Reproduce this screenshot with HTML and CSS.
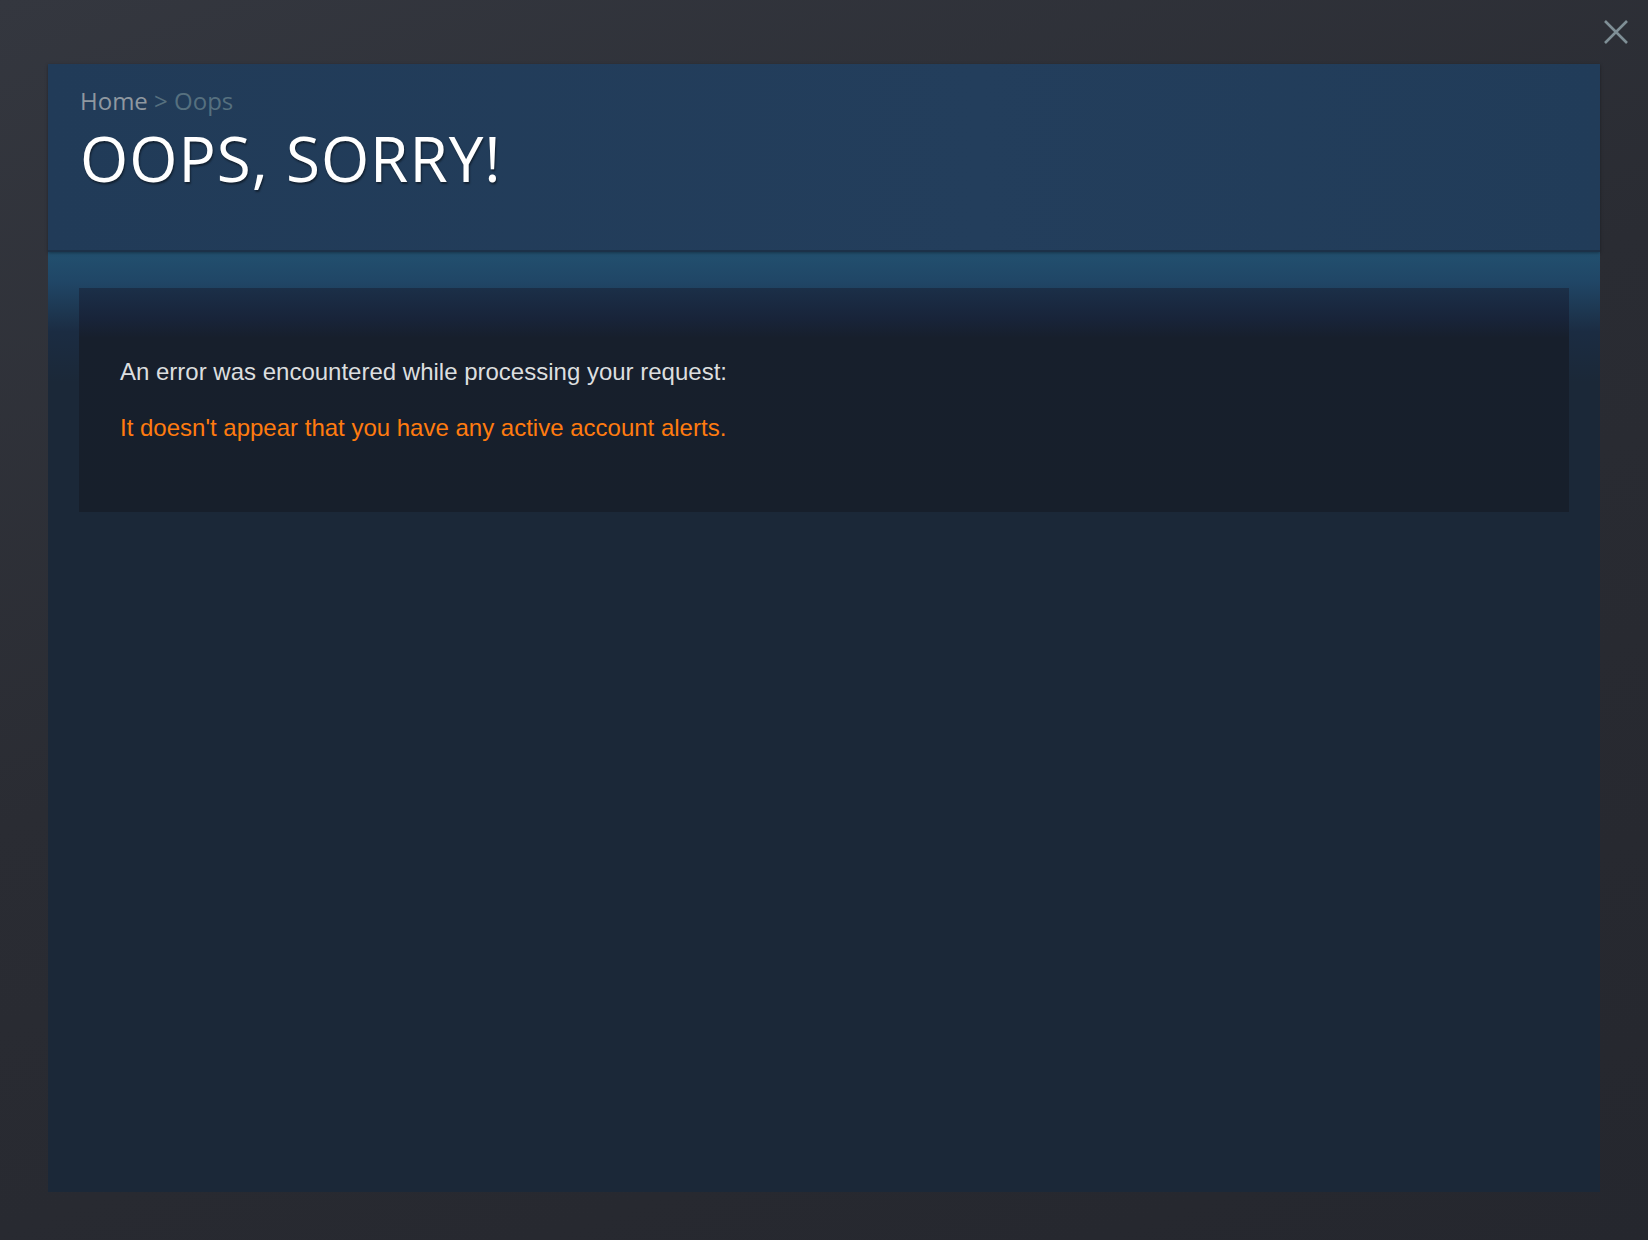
FILE: index.html
```html
<!DOCTYPE html>
<html lang="en">
<head>
<meta charset="UTF-8">
<title>Oops, sorry!</title>
<link rel="stylesheet" href="styles.css">
</head>
<body>

<a class="close" href="#" title="Close">
    <svg width="24" height="24" viewBox="0 0 24 24"><path d="M1 1 L23 23 M23 1 L1 23" stroke="#7f8f96" stroke-width="2.6" fill="none"/></svg>
</a>

<div class="modal">
    <div class="page-header">
        <div class="breadcrumbs"><a href="#">Home</a> &gt; <span class="current">Oops</span></div>
        <h1>Oops, sorry!</h1>
    </div>
    <div class="page-content">
        <div class="error-box">
            <p class="intro">An error was encountered while processing your request:</p>
            <p class="error">It doesn't appear that you have any active account alerts.</p>
        </div>
    </div>
</div>

</body>
</html>
```

FILE: styles.css
```css
body {
    margin: 0;
    padding: 64px 48px 48px;
    min-height: 1240px;
    box-sizing: border-box;
    background: linear-gradient(160deg, #34373f 0%, #2a2c33 45%, #25272e 100%);
    font-family: Arial, "Liberation Sans", sans-serif;
}
.close {
    position: absolute;
    top: 20px;
    left: 1604px;
    display: block;
    width: 24px;
    height: 24px;
}
.modal {
    width: 1552px;
    height: 1128px;
    background: #1b2838;
    display: flex;
    flex-direction: column;
}
.page-header {
    position: relative;
    z-index: 1;
    height: 188px;
    box-sizing: border-box;
    padding: 22px 32px 0;
    background: linear-gradient(90deg, #213b58 0%, #233e5c 60%, #213c59 100%);
    border-bottom: 2px solid #1c3148;
    box-shadow: 0 1px 3px rgba(0, 0, 0, 0.35);
}
.breadcrumbs {
    font-family: "Open Sans", "Noto Sans", sans-serif;
    font-size: 24px;
    line-height: 30px;
    color: #56707f;
}
.breadcrumbs a {
    color: #8f98a0;
    text-decoration: none;
}
.breadcrumbs .current {
    color: #56707f;
}
h1 {
    margin: 6px 0 0;
    font-family: "Open Sans", "Noto Sans", sans-serif;
    font-weight: 400;
    font-size: 62px;
    line-height: 72px;
    letter-spacing: 1px;
    text-transform: uppercase;
    color: #ffffff;
    text-shadow: 1px 2px 2px rgba(0, 0, 0, 0.45);
}
.page-content {
    flex: 1;
    padding: 36px 31px 0;
    background: linear-gradient(180deg, #22506f 0%, #204666 30px, #1b2c42 80px, #1b2838 130px);
    background-repeat: no-repeat;
}
.error-box {
    height: 224px;
    box-sizing: border-box;
    padding: 69px 41px 0;
    background: linear-gradient(180deg, #1b2f48 0%, #18243a 30px, #171f2c 50px, #171f2b 100%);
}
.error-box p {
    margin: 0;
    font-size: 24px;
    line-height: 30px;
}
.intro {
    color: #dcdedf;
}
.error {
    margin-top: 26px !important;
    color: #ff7b0f;
}
```
